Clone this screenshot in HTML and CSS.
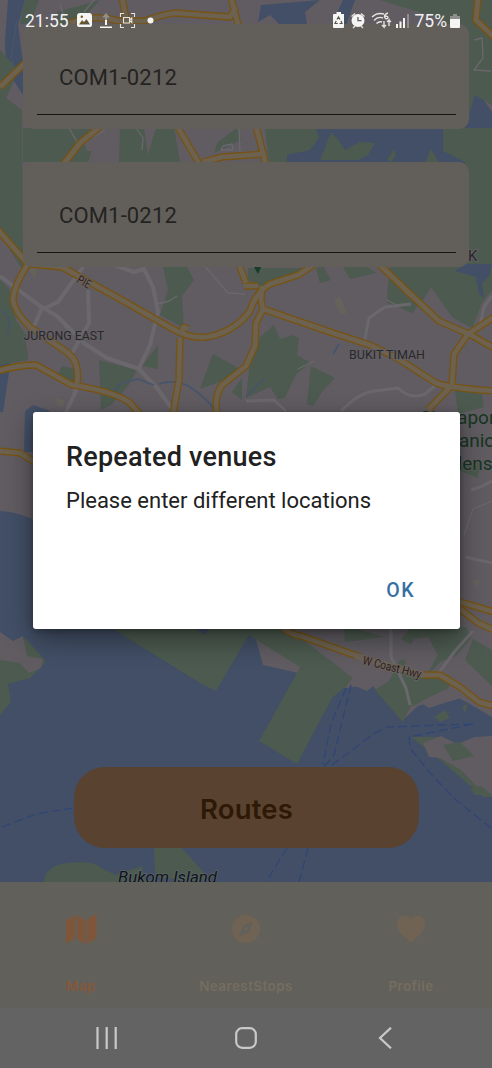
FILE: index.html
```html
<!DOCTYPE html>
<html lang="en">
<head>
<meta charset="utf-8">
<title>Routes</title>
<link rel="stylesheet" href="styles.css">
</head>
<body>
<div class="phone">
  <main class="screen">
    <svg class="map" viewBox="0 0 492 882" aria-hidden="true">
      <defs>
        <g id="highways">
          <path d="M0 87 26 62"/>
          <path d="M70 23Q97 14 118 21H145Q160 15 175 13L230 17 236 7"/>
          <path d="M122 -2 128 28M231 -2 239 28M478 -2 476 20 494 37"/>
          <path d="M101 126 80 143 63 165M177 126 200 165M203 162 222 157 264 154M256 126 266 165"/>
          <path d="M-2 230 28 264Q14 285 13 300 15 313 30 327L68 353Q80 362 77 384"/>
          <path d="M28 264 62 267 120 299 171 328Q193 341 212 336 236 330 250 311 256 292 270 284L298 275 315 264"/>
          <path d="M183 334Q181 324 188 329M180 338 179 380 173 414"/>
          <path d="M-2 371Q18 365 36 365L72 385Q112 391 129 402L140 414"/>
          <path d="M238 262 246 283M244 286 258 286M262 286 261 300 263 309 256 323 255 346 246 366 222 385Q214 396 217 414"/>
          <path d="M263 309 330 332 370 345 397 358 436 383Q450 388 494 391"/>
          <path d="M379 264 408 292 439 321 471 335 494 348M494 317 468 334 454 354 452 385 428 410"/>
          <path d="M-2 451 20 453 36 463M460 602 494 612M460 609 478 623 494 630"/>
          <path d="M283 628Q291 635 301 636L360 657M422 675 440 675 460 687 479 702 494 706"/>
        </g>
      </defs>
      <rect class="land" width="492" height="882"/>
      <g class="water">
        <path d="M8 0H25L18 25 23 62 23 95 6 69 5 40ZM261 5 320 0 305 12 307 25H280L270 15 258 22ZM343 0H355L345 28H330ZM286 120H492V165H286ZM462 80 480 94 492 112V140H462Z"/>
        <path d="M0 292 12 315 14 340 3 412 0 412ZM25 411 33 405 50 411V452H24ZM0 511Q20 512 38 522L80 590 250 618 263 665 320 678 345 688 372 685 402 721 418 706 455 696 470 704 492 717V882H0Z"/>
      </g>
      <g class="park">
        <path d="M0 50 19 70 6 98 22 110 23 270 0 235ZM57 12 100 0 85 16 90 24H58ZM25 0 39 0 30 24 20 24ZM300 0H492V105L475 95 465 128H445V20L380 0Z"/>
        <path d="M100 128 88 162H23V128ZM120 128H144L148 155 156 128H174L180 162H119ZM237 128 241 140 214 153 218 142ZM265 128H316L319 138 310 150 287 155V162H269ZM320 160 331 132 340 142 345 150 360 142 375 143 368 155 358 160ZM387 160 394 149 396 155 391 162ZM425 162 431 149 439 162ZM443 128H492V265H465V162L443 151Z"/>
        <path d="M163 267H187L194 280 182 296 184 328 160 315 168 290ZM0 280 9 288 16 320 28 338V360L0 365ZM62 366 78 370 76 387 57 376ZM99 360 137 370 128 386 111 405 101 410ZM213 354 238 368 222 381 200 389ZM242 378V400L232 392Z"/>
        <path d="M158 345 158 369 142 366ZM248 268H306L265 288 248 280ZM316 268 323 266 331 280 320 283ZM343 267H367L376 273 350 279ZM390 267H492V290L482 303 472 328 452 317 431 287 425 297 412 313 399 307 387 303 388 285ZM246 398 252 344 274 325 280 339 293 335 299 339 297 355 311 363 296 374 285 398 278 399 270 387ZM311 366 335 378 322 392 313 406 307 404ZM455 390 482 394 484 407 458 414ZM461 463H480L478 478 460 471Z"/>
        <path d="M0 632 12 642 25 638 39 653 46 662 30 678 8 684 11 702 0 715ZM105 624H290L311 650 353 680 332 698 297 764 259 741 302 664 250 633 216 691 200 683ZM250 625 285 628 310 645 353 678 345 688 300 667 249 635ZM344 625 385 637 345 642ZM411 627H466L471 638 456 656 440 662 423 680 403 722 375 690 389 681 400 660 407 659 412 645 401 639ZM473 639 492 650V686L465 660ZM418 674 453 680 445 692 429 698 413 706 405 691ZM434 717 445 710 450 718 440 722ZM411 737 438 737 492 755V797H483L440 760Z"/>
        <path d="M44 882Q45 866 67 863 95 860 101 868L116 875 142 866 145 882ZM154 848H182L207 876 200 882 155 877Z"/>
      </g>
      <g class="water">
        <path d="M194 628 209 625 206 635ZM455 271 466 264H492L489 276 482 283 484 298 479 294 476 277Z"/>
      </g>
      <g class="land">
        <path d="M82 139 95 131 118 128 119 162 107 162 97 151 87 151ZM0 632 13 641 23 636 27 656 43 659 41 668 29 673 20 663 0 660ZM25 338 44 340 56 365 28 356ZM423 743 441 736 457 744 475 737 492 736V795L482 792 461 770 440 758 429 757ZM420 702 444 690 456 687 461 698 438 705 429 708ZM330 653 355 655 376 662 384 676 376 684 367 691 348 683 353 678ZM414 639 428 637 438 655 425 678 406 669 405 655ZM458 684 472 690 469 697Z"/>
      </g>
      <g class="park"><path d="M443 745 460 742 474 756 453 761ZM470 789 481 786 492 795 475 795ZM462 707 468 703 465 714Z"/></g>
      <g class="blocks"><path d="M334 300 340 296 347 313 340 315ZM28 268H37L35 280ZM56 397 65 401 63 407 57 405ZM472 581 480 579 477 588Z"/></g>
      <g class="streets">
        <path d="M0 276 40 306 57 316 85 344 107 358 139 369 157 388 172 409"/>
        <path d="M83 267 58 302 41 310 32 331M88 290 89 323 71 355M111 264 134 272 144 269 153 287 158 312 150 345 139 368M78 387 66 412"/>
        <path class="street-wide" d="M364 344 369 318 385 307 411 304M341 411Q360 392 375 391L398 388Q410 400 425 394L436 385M479 330 484 307 492 296M471 490 480 487 492 481M465 557 492 563M246 401 274 400 286 411"/>
        <path class="street-thin" d="M158 304 169 301 177 296M203 264 228 293 245 294M239 128 240 155M221 150 223 146 232 144 233 150ZM74 387 72 403M64 326 98 354M387 300 398 306M298 369 314 361M464 535 473 509 492 501M474 40 482 38 483 58 474 70 491 71M69 128 79 145 105 130M134 125 143 138 142 150M67 25 60 5M84 12 94 0"/>
        <path class="street-wide" d="M391 629 391 657 406 688 410 705M473 631 455 651 438 674"/>
      </g>
      <g class="streams"><path d="M159 384Q178 378 193 389T214 409M109 395 122 383 138 379 154 385M339 344 333 354M2 310 10 322 7 335M17 20 11 57 18 76M246 396 265 378"/></g>
      <g class="ferries">
        <path d="M2 827 36 814 73 808M351 685 334 755 324 767M346 688 331 724 323 765M332 765 375 733 388 727 470 724M473 724 409 737 410 748 430 773 456 800 492 829M287 848 266 882M308 848 299 882"/>
      </g>
      <use href="#highways" class="highway-edge"/>
      <use href="#highways" class="highway-fill"/>
      <g class="coast-road"><path class="highway-edge" d="M355 656 424 675"/></g>
      <g class="map-label">
        <text x="23.500" y="340" textLength="81" lengthAdjust="spacingAndGlyphs">JURONG EAST</text>
        <text x="349" y="359" textLength="76" lengthAdjust="spacingAndGlyphs">BUKIT TIMAH</text>
        <text x="468" y="261" font-size="15">K</text>
      </g>
      <g class="road-label">
        <text transform="translate(76 282) rotate(29)" textLength="14" lengthAdjust="spacingAndGlyphs">PIE</text>
        <text transform="translate(362 664) rotate(14)" textLength="60" lengthAdjust="spacingAndGlyphs">W Coast Hwy</text>
      </g>
      <g class="garden-label">
        <text x="420" y="424">Singapore</text>
        <text x="430" y="447">Botanic</text>
        <text x="422" y="470">Gardens</text>
        <path class="garden-pin" d="M254 267H261L258 274Z"/>
      </g>
      <text class="island-label" x="118" y="883" textLength="99" lengthAdjust="spacingAndGlyphs">Bukom Island</text>
    </svg>
    <div class="fields">
      <div class="field-card"><div class="field">COM1-0212</div></div>
      <div class="field-card"><div class="field">COM1-0212</div></div>
    </div>
    <div class="routes-button">Routes</div>
  </main>

  <nav class="tabs">
    <div class="tab tab-active">
      <svg width="32" height="30" viewBox="0 0 32 30"><path d="M1 6.200 9.800 1V24L3 29Q1 29.500 1 27.500ZM12 1 20 6V30L12 25ZM22 6 29 1Q31.500 0 31.500 3V24L22 30Z"/></svg>
      <span>Map</span>
    </div>
    <div class="tab">
      <svg width="32" height="30" viewBox="0 0 32 30"><path fill-rule="evenodd" d="M16 1a14 14 0 1 0 0 28 14 14 0 0 0 0-28ZM23 8 19 18.500 9 22 13 11.500ZM16 13.200a1.800 1.800 0 1 0 0 3.600 1.800 1.800 0 0 0 0-3.600Z"/></svg>
      <span>NearestStops</span>
    </div>
    <div class="tab">
      <svg width="32" height="30" viewBox="0 0 32 30"><path d="M16 28.500C9 22.500 2 17.500 2 10 2 2 11-1 16 5 21-1 30 2 30 10 30 17.500 23 22.500 16 28.500Z"/></svg>
      <span>Profile</span>
    </div>
  </nav>

  <div class="system-bar">
    <svg width="22" height="22" viewBox="0 0 22 22"><path d="M1.500 0V22M10.700 0V22M19.700 0V22"/></svg>
    <svg width="22" height="22" viewBox="0 0 22 22"><rect x="1.200" y="1.200" width="19.600" height="19.600" rx="6"/></svg>
    <svg width="22" height="22" viewBox="0 0 22 22"><path d="M17 0.700 6 11 17 21.300"/></svg>
  </div>

  <header class="status-bar">
    <span class="clock">21:55</span>
    <svg class="status-left" width="80" height="18" viewBox="0 0 80 18">
      <path fill-rule="evenodd" d="M3 1H12Q15 1 15 4V13Q15 15 12 15H3Q0 15 0 13V4Q0 1 3 1ZM2 12.500H13L9.500 7 7 10 5 8ZM4.800 3.500a1.200 1.200 0 1 0 0 2.400 1.200 1.200 0 0 0 0-2.400Z"/>
      <path class="dim" d="M29 1 33 5.500H30V8H28V5.500H25Z"/><path d="M28 8H30V13H28ZM23 14.500H35V16H23Z"/>
      <path class="outline" d="M43.500 5V1.500H47M54 1.500H57.500V5M57.500 12V15.500H54M47 15.500H43.500V12M46.500 5.500H52.500V11H46.500ZM52.500 8 54.800 6V10.500Z"/>
      <circle cx="73.500" cy="8.500" r="3"/>
    </svg>
    <svg class="status-right" width="76" height="18" viewBox="0 0 76 18">
      <path d="M3.500 0H8V2H11V15Q11 16 10 16H1Q0 16 0 15V3Q0 2 1 2H3.500Z"/>
      <path class="recycle" d="M4 7.500 5.500 5 7 7.500M8 9 9 11.500H6.500M4.800 11.500H2L3.200 9"/>
      <path fill-rule="evenodd" d="M25 2a6.500 6.500 0 1 0 0 13 6.500 6.500 0 0 0 0-13ZM24.300 5H25.600V8H28.500V9.200H24.300Z"/>
      <path class="outline strong" d="M18.500 4.500 22 1.500M31.500 4.500 28 1.500M20 16 22 14M30 16 28 14"/>
      <path class="outline strong" d="M39 5Q44 0 51 2M41 8.500Q45 4 50 6M43.500 11.500Q46 9 49 10M55 1Q51.500 2 51.500 5 53 8 55 6 55 3.500 51.500 4.500M51 9V15L49 13M51 15 53 13M56 14V8L54 10M56 8 58 10"/>
      <path d="M63 12H65V16H63ZM66.500 9.500H68.500V16H66.500ZM70 6H72V16H70Z"/><path class="dim" d="M74 2H76V16H74Z"/>
    </svg>
    <span class="charge">75%</span>
    <svg class="battery" width="10" height="16" viewBox="0 0 10 16"><path class="dim" d="M3 1H7V3H10V7H0V3H3Z"/><path d="M0 6H10V14Q10 15 9 15H1Q0 15 0 14Z"/></svg>
  </header>

  <div class="dialog-layer">
    <section class="dialog" role="alertdialog">
      <h1>Repeated venues</h1>
      <p>Please enter different locations</p>
      <div class="actions"><span class="ok">OK</span></div>
    </section>
  </div>
</div>
</body>
</html>
```
FILE: styles.css
```css
* { box-sizing: border-box; }
body { margin: 0; font-family: Roboto, "Liberation Sans", sans-serif; background: #636363; }
.phone { position: relative; display: flex; flex-direction: column; width: 492px; height: 1068px; overflow: hidden; }

.screen { position: relative; height: 882px; display: flex; flex-direction: column; padding: 24px 23px 34px; }
.map { position: absolute; inset: 0; width: 492px; height: 882px; }
.land { fill: #605c62; }
.water { fill: #424f66; }
.park { fill: #4c5a4f; }
.blocks { fill: #67615b; }
.streets { fill: none; stroke: #6a686d; stroke-width: 4; stroke-linejoin: round; }
.street-wide { stroke-width: 3; }
.street-thin { stroke-width: 1.3; }
.streams { fill: none; stroke: #46556b; stroke-width: 1.7; }
.ferries { fill: none; stroke: #304575; stroke-width: 1.2; stroke-dasharray: 9 4; }
.highway-edge { fill: none; stroke: #765312; stroke-width: 7.3; stroke-linejoin: round; }
.highway-fill { fill: none; stroke: #6d6250; stroke-width: 4.7; stroke-linejoin: round; }
.coast-road .highway-edge { stroke: #6a6257; stroke-width: 6; }
.map-label { font-size: 13.5px; fill: #28272a; stroke: #625f63; stroke-width: 2px; paint-order: stroke; }
.road-label { font-size: 12px; fill: #30201b; stroke: #6a635d; stroke-width: 2px; paint-order: stroke; }
.garden-label { font-size: 19px; fill: #173522; stroke: #605e61; stroke-width: 1.5px; paint-order: stroke; }
.garden-pin { fill: #173c28; stroke: none; }
.island-label { font-size: 17px; font-style: italic; fill: #111315; stroke: #59646b; stroke-width: 1.5px; paint-order: stroke; }

.fields { position: relative; display: flex; flex-direction: column; gap: 33.500px; }
.field-card { height: 104.500px; padding: 14px 13px 14px 14px; border-radius: 10px; background: #625f5a; }
.field { height: 77px; padding: 27px 22px 0; border-bottom: 1px solid #151515; font-size: 22px; line-height: 26px; letter-spacing: 0.15px; color: #242322; }
.routes-button { position: relative; display: flex; align-items: center; justify-content: center; width: 345px; height: 81px; margin: auto 0 0 51px; padding-top: 2px; border-radius: 31px; background: #5a4230; color: #2d1905; font-family: Inter, sans-serif; font-size: 27.500px; font-weight: 600; letter-spacing: 0.2px; }

.tabs { display: flex; justify-content: space-between; height: 126px; padding: 32px 32px 0; background: #62605a; color: #756d5f; }
.tab { display: flex; flex-direction: column; align-items: center; gap: 33px; width: 98px; fill: #706353; font-family: Inter, sans-serif; font-size: 13.500px; line-height: 18px; font-weight: 600; letter-spacing: 0.4px; }
.tab-active { color: #85583b; fill: #80563a; }

.system-bar { display: flex; justify-content: space-between; align-items: center; height: 60px; padding: 0 96px; background: #636363; }
.system-bar svg { fill: none; stroke: #c9c9c9; stroke-width: 2.200; }

.status-bar { position: absolute; top: 0; left: 0; display: flex; align-items: center; width: 492px; height: 41px; padding: 0 32px 0 25px; color: #f2f2f2; fill: #f5f5f3; font-size: 17.500px; }
.status-left { margin-left: 8px; }
.status-right { margin-left: auto; }
.charge { margin-left: 6px; }
.battery { margin-left: 3px; }
.dim { fill: #8f8e8d; }
.outline { fill: none; stroke: #e5e3dc; stroke-width: 1.1; }
.strong { stroke-width: 1.4; }
.recycle { fill: none; stroke: #55534f; stroke-width: 1.2; }

.dialog-layer { position: absolute; inset: 0; padding: 412px 32px 0 33px; }
.dialog { height: 217px; padding: 29px 34px 0 33px; border-radius: 3px; background: #fff; box-shadow: 0 10px 28px rgba(0, 0, 0, 0.4), 0 2px 6px rgba(0, 0, 0, 0.25); color: #212121; }
.dialog h1 { margin: 0; font-size: 27px; line-height: 32px; font-weight: 500; letter-spacing: 0.23px; }
.dialog p { margin: 14px 0 0; font-size: 22px; line-height: 28px; }
.actions { display: flex; justify-content: flex-end; padding: 64px 11px 0 0; }
.ok { color: #366fa4; font-size: 19.500px; line-height: 24px; font-weight: 500; letter-spacing: 1.5px; }
```
